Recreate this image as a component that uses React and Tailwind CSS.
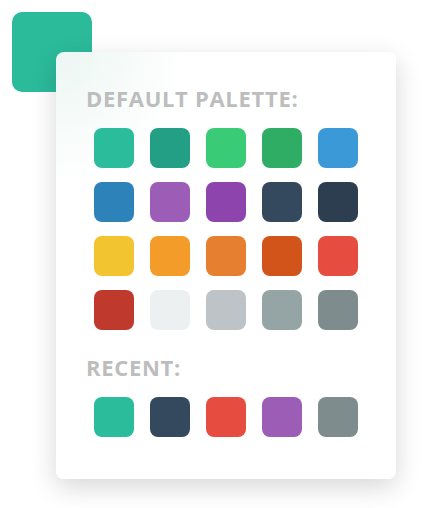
import React from "react";

const rows = [
  ["#2bbc9b", "#229f84", "#3acb77", "#2fad64", "#3b99d8"],
  ["#2e82ba", "#9b5db5", "#8e44ad", "#34495e", "#2c3e50"],
  ["#f2c530", "#f39c2a", "#e67f30", "#d3541a", "#e74c41"],
  ["#c0392d", "#ecf0f1", "#bdc3c7", "#95a5a6", "#7f8c8d"],
];

const recent = ["#2bbc9b", "#34495e", "#e74c41", "#9b5db5", "#7f8c8d"];

function Swatch({ color }) {
  return <div className="w-10 h-10 rounded-[8px]" style={{ backgroundColor: color }} />;
}

export default function App() {
  return (
    <div className="relative w-[426px] h-[508px] bg-white overflow-hidden" style={{ fontFamily: '"Open Sans", "Liberation Sans", sans-serif' }}>
      <div className="absolute left-[12px] top-[12px] w-[80px] h-[80px] rounded-[10px] bg-[#2bbb9b]" />
      <div className="relative ml-[56px] mt-[52px] w-[340px] h-[427px] rounded-[8px] bg-[radial-gradient(circle_at_0_0,#ebf6f3,#ffffff_130px)] shadow-[0_8px_26px_rgba(0,0,0,0.16)] pt-[32px]">
        <div className="px-[30px] text-[22px] leading-[28px] font-[750] tracking-[0.7px] text-[#bdbdbd]">DEFAULT PALETTE:</div>
        <div className="mt-[16px] flex flex-col gap-[14px] items-center">
          {rows.map((r, i) => (
            <div key={i} className="flex gap-4">
              {r.map((c, j) => (
                <Swatch key={j} color={c} />
              ))}
            </div>
          ))}
        </div>
        <div className="mt-[23px] px-[30px] text-[22px] leading-[28px] font-[750] tracking-[0.7px] text-[#bdbdbd]">RECENT:</div>
        <div className="mt-[16px] flex gap-4 justify-center">
          {recent.map((c, j) => (
            <Swatch key={j} color={c} />
          ))}
        </div>
      </div>
    </div>
  );
}
